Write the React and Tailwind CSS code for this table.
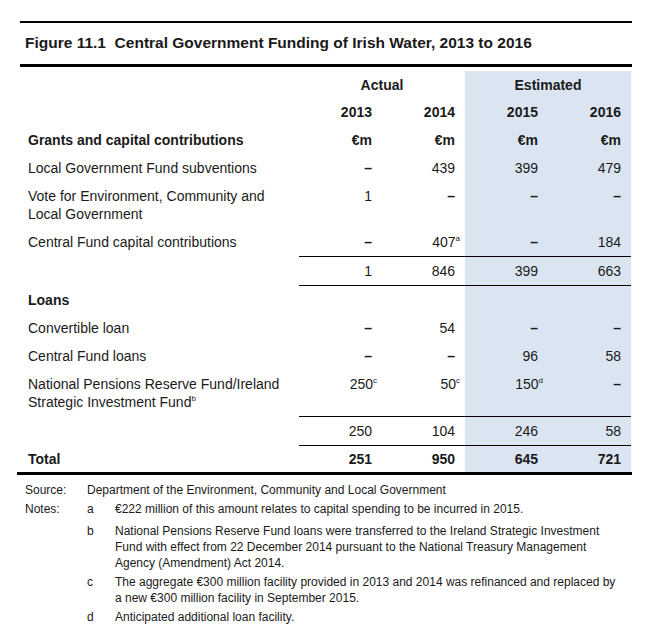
import React from "react";

const font = { fontFamily: '"Liberation Sans", Arial, sans-serif' };

const rows = [
  { label: "Local Government Fund subventions", vals: ["–", "439", "399", "479"] },
  { label: ["Vote for Environment, Community and", "Local Government"], vals: ["1", "–", "–", "–"] },
  { label: "Central Fund capital contributions", vals: ["–", ["407", "a"], "–", "184"] },
];

const loans = [
  { label: "Convertible loan", vals: ["–", "54", "–", "–"] },
  { label: "Central Fund loans", vals: ["–", "–", "96", "58"] },
  {
    label: ["National Pensions Reserve Fund/Ireland", ["Strategic Investment Fund", "b"]],
    vals: [["250", "c"], ["50", "c"], ["150", "d"], "–"],
  },
];

const Sup = ({ children }) => (
  <sup className="relative -top-[6px] -mr-[5px] text-[8px] leading-none">{children}</sup>
);

const Val = ({ v }) =>
  Array.isArray(v) ? (
    <>
      {v[0]}
      <Sup>{v[1]}</Sup>
    </>
  ) : v === "–" ? (
    <span className="font-bold">–</span>
  ) : (
    v
  );

const Cell = ({ i, children, className = "" }) => (
  <div
    className={`pr-[10px] text-right ${i >= 2 ? "bg-[#dbe5f1]" : ""} ${className}`}
  >
    {children}
  </div>
);

const Row = ({ label, vals, bold, line, h = "py-[5px]" }) => (
  <div className="grid grid-cols-[279px_83px_83px_83px_83px] leading-[18px]">
    <div className={`pl-[8px] whitespace-nowrap ${h} ${bold ? "font-bold" : ""}`}>
      {Array.isArray(label)
        ? label.map((l, k) => (
            <div key={k}>
              <Val v={l} />
            </div>
          ))
        : label}
    </div>
    {vals.map((v, i) => (
      <Cell key={i} i={i} className={`${h} ${bold ? "font-bold" : ""} ${line || ""}`}>
        <Val v={v} />
      </Cell>
    ))}
  </div>
);

const notes = [
  ["a", ["€222 million of this amount relates to capital spending to be incurred in 2015."]],
  [
    "b",
    [
      "National Pensions Reserve Fund loans were transferred to the Ireland Strategic Investment",
      "Fund with effect from 22 December 2014 pursuant to the National Treasury Management",
      "Agency (Amendment) Act 2014.",
    ],
  ],
  [
    "c",
    [
      "The aggregate €300 million facility provided in 2013 and 2014 was refinanced and replaced by",
      "a new €300 million facility in September 2015.",
    ],
  ],
  ["d", ["Anticipated additional loan facility."]],
];

export default function App() {
  return (
    <div className="min-h-[641px] w-[650px] bg-white text-[#1a1a1a]" style={font}>
      <div className="ml-[20px] w-[612px] pt-[21px]">
        <div className="h-[2px] bg-black" />
        <div className="pb-[11px] pl-[5px] pt-[10px] text-[15.5px] font-bold leading-[20px] whitespace-nowrap">
          Figure 11.1&nbsp; Central Government Funding of Irish Water, 2013 to 2016
        </div>
        <div className="h-[3px] bg-black" />
        <div className="h-[4px]" />

        <div className="text-[14px]">
          <div className="grid grid-cols-[279px_166px_166px] font-bold leading-[18px]">
            <div />
            <div className="pb-[4px] pt-[5px] text-center">Actual</div>
            <div className="bg-[#dbe5f1] pb-[4px] pt-[5px] text-center">Estimated</div>
          </div>
          <Row label="" vals={["2013", "2014", "2015", "2016"]} bold />
          <Row label="Grants and capital contributions" vals={["€m", "€m", "€m", "€m"]} bold />
          {rows.map((r, k) => (
            <Row key={k} {...r} />
          ))}
          <Row label="" vals={["1", "846", "399", "663"]} line="border-y border-black" />
          <Row label="Loans" vals={["", "", "", ""]} bold />
          {loans.map((r, k) => (
            <Row key={k} {...r} />
          ))}
          <Row label="" vals={["250", "104", "246", "58"]} line="border-y border-black" />
          <Row label="Total" vals={["251", "950", "645", "721"]} bold h="py-[4px]" />
        </div>
        <div className="-ml-[3px] h-[3px] w-[615px] bg-black" />

        <div className="mt-[7px] text-[12px] leading-[16px]">
          <div className="flex pl-[5px]">
            <div className="w-[62px]">Source:</div>
            <div>Department of the Environment, Community and Local Government</div>
          </div>
          {notes.map(([letter, lines], k) => (
            <div
              key={letter}
              className={`flex pl-[5px] ${k === 1 ? "mt-[6px]" : "mt-[3px]"}`}
            >
              <div className="w-[62px]">{k === 0 ? "Notes:" : ""}</div>
              <div className="w-[28px]">{letter}</div>
              <div className="whitespace-nowrap">
                {lines.map((l, j) => (
                  <div key={j}>{l}</div>
                ))}
              </div>
            </div>
          ))}
        </div>
      </div>
    </div>
  );
}
